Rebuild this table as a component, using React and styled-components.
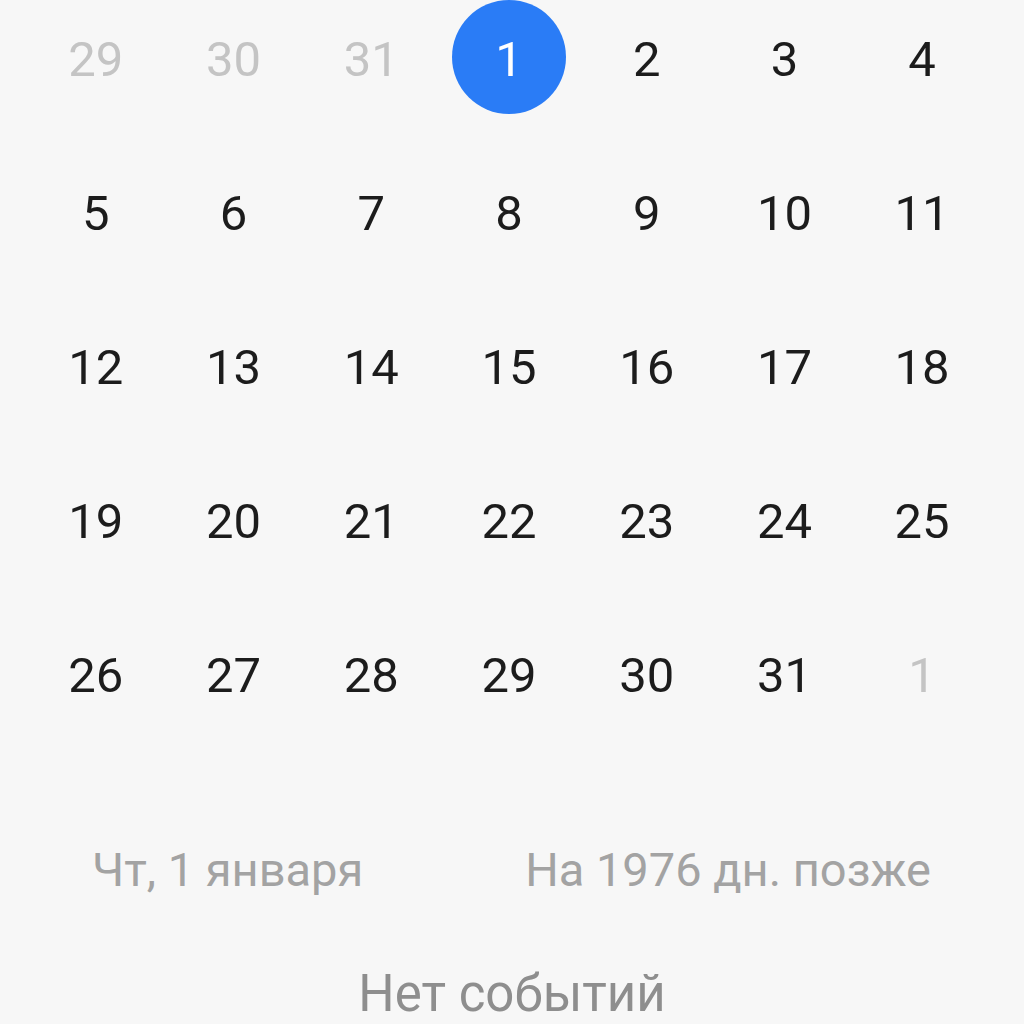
import React from 'react';
import styled, { createGlobalStyle } from 'styled-components';

const GlobalStyle = createGlobalStyle`
  html, body {
    margin: 0;
    padding: 0;
    background: #f7f7f7;
  }
  body {
    width: 1024px;
    height: 1024px;
    overflow: hidden;
    font-family: Roboto, 'Noto Sans', sans-serif;
  }
`;

const Screen = styled.div`
  display: flex;
  flex-direction: column;
  width: 1024px;
  height: 1024px;
  background: #f7f7f7;
`;

const MonthGrid = styled.div`
  display: grid;
  grid-template-columns: repeat(7, 1fr);
  grid-auto-rows: 114px;
  row-gap: 40px;
  padding: 0 33px 0 27px;
`;

const Day = styled.div`
  display: flex;
  align-items: center;
  justify-content: center;
`;

const DayNumber = styled.span`
  display: flex;
  align-items: center;
  justify-content: center;
  width: 114px;
  height: 114px;
  border-radius: 50%;
  font-size: 49px;
  line-height: 1;
  padding-top: 4px;
  box-sizing: border-box;
  color: ${(p) => (p.$selected ? '#ffffff' : p.$muted ? '#c4c4c4' : '#1c1c1c')};
  background: ${(p) => (p.$selected ? '#2a7cf6' : 'transparent')};
`;

const InfoRow = styled.div`
  display: flex;
  justify-content: space-between;
  margin-top: 116px;
  padding: 0 93px 0 92px;
  font-size: 47px;
  line-height: 1;
  color: #a3a3a3;
`;

const Empty = styled.div`
  margin-top: 75px;
  text-align: center;
  font-size: 51px;
  line-height: 1;
  color: #8e8e8e;
`;

const days = [
  { n: 29, muted: true }, { n: 30, muted: true }, { n: 31, muted: true },
  { n: 1, selected: true },
  ...Array.from({ length: 30 }, (_, i) => ({ n: i + 2 })),
  { n: 1, muted: true },
];

export default function App() {
  return (
    <Screen>
      <GlobalStyle />
      <MonthGrid>
        {days.map((d, i) => (
          <Day key={i}>
            <DayNumber $muted={d.muted} $selected={d.selected}>{d.n}</DayNumber>
          </Day>
        ))}
      </MonthGrid>
      <InfoRow>
        <span>Чт, 1 января</span>
        <span>На 1976 дн. позже</span>
      </InfoRow>
      <Empty>Нет событий</Empty>
    </Screen>
  );
}
